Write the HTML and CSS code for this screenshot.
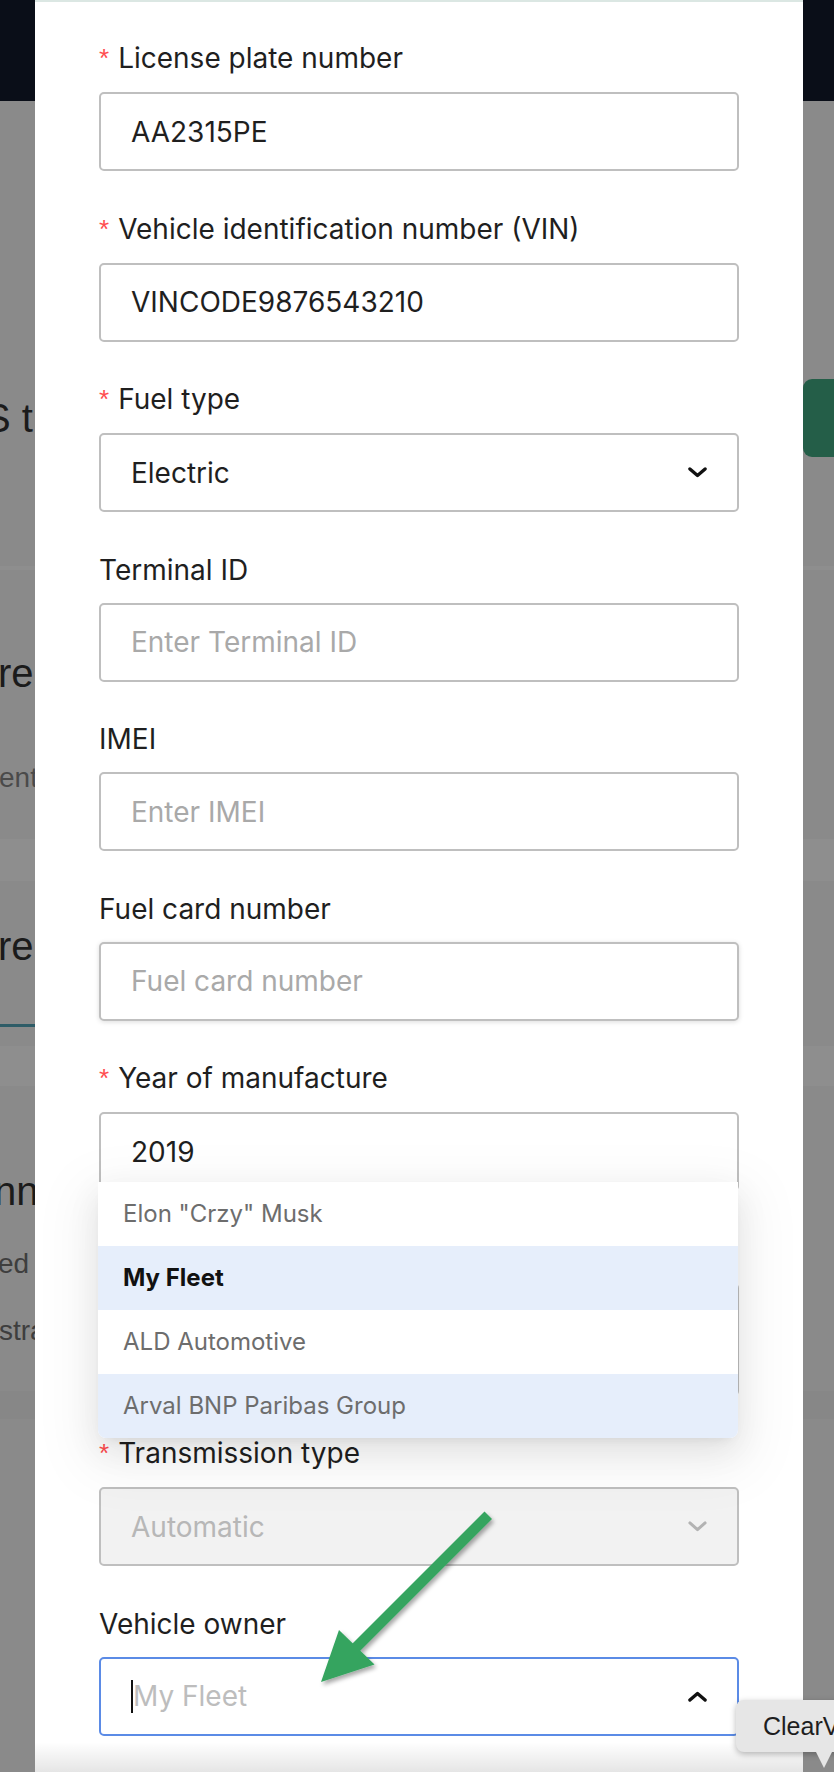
FILE: index.html
```html
<!DOCTYPE html>
<html lang="en">
<head>
<meta charset="utf-8">
<title>Edit vehicle</title>
<link rel="stylesheet" href="styles.css">
</head>
<body>
<div class="page">
  <div class="bg-header"></div>
  <div class="bg-sec bg-sec1">
    <div class="bg-h bg-h1">S tracking</div>
    <div class="bg-btn"></div>
  </div>
  <div class="bg-band bg-band-thin"></div>
  <div class="bg-sec bg-sec2">
    <div class="bg-h bg-re">re settings</div>
    <div class="bg-sub bg-ent">ent devices</div>
  </div>
  <div class="bg-band bg-band-a"></div>
  <div class="bg-sec bg-sec3">
    <div class="bg-h bg-re2">re list</div>
    <div class="bg-tab-line"></div>
  </div>
  <div class="bg-band bg-band-b"></div>
  <div class="bg-sec bg-sec4">
    <div class="bg-h bg-nn">nnected</div>
    <div class="bg-sub bg-ed">ed by</div>
    <div class="bg-sub bg-stra">stration</div>
  </div>
  <div class="bg-band bg-band-c"></div>
</div>

<div class="modal">
  <div class="field">
    <div class="label"><span class="req">*</span>License plate number</div>
    <div class="control">AA2315PE</div>
  </div>
  <div class="field">
    <div class="label"><span class="req">*</span>Vehicle identification number (VIN)</div>
    <div class="control">VINCODE9876543210</div>
  </div>
  <div class="field">
    <div class="label"><span class="req">*</span>Fuel type</div>
    <div class="control select">
      <span>Electric</span>
      <svg class="chev" viewBox="0 0 19 11" width="19" height="11"><path d="M1.9 1.9 L9.5 8.6 L17.1 1.9" fill="none" stroke="currentColor" stroke-width="3.3" stroke-linecap="round" stroke-linejoin="round"/></svg>
    </div>
  </div>
  <div class="field">
    <div class="label">Terminal ID</div>
    <div class="control placeholder">Enter Terminal ID</div>
  </div>
  <div class="field">
    <div class="label">IMEI</div>
    <div class="control placeholder">Enter IMEI</div>
  </div>
  <div class="field">
    <div class="label">Fuel card number</div>
    <div class="control placeholder shadowed">Fuel card number</div>
  </div>
  <div class="field">
    <div class="label"><span class="req">*</span>Year of manufacture</div>
    <div class="control">2019</div>
  </div>
  <div class="field">
    <div class="label"><span class="req">*</span>Vehicle type</div>
    <div class="control tall placeholder">Enter description</div>
  </div>
  <div class="field">
    <div class="label"><span class="req">*</span>Transmission type</div>
    <div class="control select disabled">
      <span>Automatic</span>
      <svg class="chev" viewBox="0 0 19 11" width="19" height="11"><path d="M1.9 1.9 L9.5 8.6 L17.1 1.9" fill="none" stroke="currentColor" stroke-width="3" stroke-linecap="round" stroke-linejoin="round"/></svg>
    </div>
  </div>
  <div class="field">
    <div class="label">Vehicle owner</div>
    <div class="control select focused">
      <span class="caret"></span><span class="ph-light">My Fleet</span>
      <svg class="chev" viewBox="0 0 19 11" width="19" height="11"><path d="M1.9 9.1 L9.5 2.4 L17.1 9.1" fill="none" stroke="currentColor" stroke-width="3.3" stroke-linecap="round" stroke-linejoin="round"/></svg>
    </div>
  </div>

  <div class="dropdown">
    <div class="opt">Elon "Crzy" Musk</div>
    <div class="opt active sel">My Fleet</div>
    <div class="opt">ALD Automotive</div>
    <div class="opt active">Arval BNP Paribas Group</div>
  </div>
  <div class="modal-fade"></div>
</div>

<svg class="annot" width="834" height="1772" viewBox="0 0 834 1772">
  <defs>
    <filter id="sh" x="-20%" y="-20%" width="140%" height="140%">
      <feDropShadow dx="2" dy="3" stdDeviation="2.2" flood-color="#000" flood-opacity="0.35"/>
    </filter>
  </defs>
  <g filter="url(#sh)" fill="#34a45f" stroke="none">
    <polygon points="484.5,1511.5 492,1519 359,1652 351.5,1644.5"/>
    <polygon points="339,1630 374.5,1664.5 321,1682"/>
  </g>
</svg>

<div class="tooltip">ClearValue</div>
</body>
</html>
```

FILE: styles.css
```css
html, body {
  margin: 0;
  padding: 0;
}
body {
  width: 834px;
  height: 1772px;
  overflow: hidden;
  position: relative;
  background: #8a8a8a;
  font-family: Inter, "Noto Sans", sans-serif;
}

/* ---------- page behind the modal (masked) ---------- */
.page {
  width: 834px;
  font-family: "Liberation Sans", Arial, sans-serif;
  color: #1c1c1c;
}
.bg-header {
  height: 101px;
  background: #0a0e18;
}
.bg-sec1 {
  height: 465px;
  display: flex;
  justify-content: space-between;
  align-items: flex-start;
}
.bg-h {
  font-size: 40px;
  line-height: 40px;
  white-space: nowrap;
  color: #1b1b1b;
}
.bg-sub {
  font-size: 28px;
  line-height: 40px;
  white-space: nowrap;
  color: #3e3e3e;
}
.bg-h1 {
  margin: 297px 0 0 -16px;
}
.bg-btn {
  margin-top: 278px;
  width: 60px;
  height: 78px;
  margin-right: -29px;
  background: #245e48;
  border-radius: 9px;
}
.bg-band {
  background: #8e8e8e;
}
.bg-band-thin { height: 4px; }
.bg-sec2 {
  height: 269px;
  padding-top: 83px;
  box-sizing: border-box;
}
.bg-re { margin-left: -2px; }
.bg-ent { margin: 65px 0 0 -1px; color: #4a4a4a; }
.bg-band-a { height: 42px; }
.bg-sec3 {
  height: 165px;
  padding-top: 45px;
  box-sizing: border-box;
}
.bg-re2 { margin-left: -2px; }
.bg-tab-line {
  margin-top: 58px;
  width: 200px;
  height: 3px;
  background: #2e5c67;
}
.bg-band-b { height: 40px; }
.bg-sec4 {
  height: 305px;
  padding-top: 85px;
  box-sizing: border-box;
}
.bg-nn { margin-left: -6px; }
.bg-ed { margin: 33px 0 0 -2px; }
.bg-stra { margin: 27px 0 0 -1px; }
.bg-band-c { height: 28px; background: #878787; }

/* ---------- modal ---------- */
.modal {
  position: absolute;
  left: 35px;
  top: 0;
  width: 768px;
  height: 1772px;
  box-sizing: border-box;
  background: #fff;
  border-top: 2px solid #dbe7e3;
  padding: 34px 64px 0;
}
.field {
  margin-bottom: 35.5px;
}
.label {
  font-size: 28px;
  line-height: 44px;
  padding-bottom: 11px;
  color: #1f1f1f;
  white-space: nowrap;
}
.req {
  color: #ff4d4f;
  font-family: "Liberation Sans", Arial, sans-serif;
  font-size: 26px;
  margin-right: 9px;
  position: relative;
  top: -1px;
}
.control {
  height: 79px;
  box-sizing: border-box;
  border: 2px solid #bfbfbf;
  border-radius: 5px;
  padding: 0 30px;
  display: flex;
  align-items: center;
  font-size: 28px;
  color: #1f1f1f;
  background: #fff;
  white-space: nowrap;
}
.control.placeholder {
  color: #a9a9a9;
}
.control.shadowed {
  box-shadow: 0 1px 5px rgba(0, 0, 0, 0.14);
}
.control.tall {
  height: 113px;
}
.chev {
  margin-left: auto;
  color: #111;
  display: block;
}
.control.disabled {
  background: #f2f2f2;
  color: #b7b7b7;
}
.control.disabled .chev {
  color: #b3b3b3;
}
.control.focused {
  border-color: #5b8be6;
}
.caret {
  width: 2px;
  height: 33px;
  background: #111;
}
.ph-light {
  color: #bdbdbd;
}

/* dropdown overlay */
.dropdown {
  position: absolute;
  top: 1180px;
  left: 63px;
  width: 640px;
  background: #fff;
  border-radius: 0 0 8px 8px;
  overflow: hidden;
  box-shadow: 0 12px 32px rgba(0, 0, 0, 0.08),
              0 6px 12px -8px rgba(0, 0, 0, 0.12),
              0 18px 56px 16px rgba(0, 0, 0, 0.05);
  z-index: 2;
}
.opt {
  height: 64px;
  line-height: 64px;
  padding: 0 25px;
  font-size: 24px;
  color: #6d6d6d;
  white-space: nowrap;
}
.opt.active {
  background: #e6eefb;
}
.opt.sel {
  font-weight: 700;
  color: #111;
}
.modal-fade {
  position: absolute;
  left: 0;
  right: 0;
  bottom: 0;
  height: 30px;
  background: linear-gradient(to bottom, rgba(0, 0, 0, 0), rgba(0, 0, 0, 0.1));
}

/* annotation arrow */
.annot {
  position: absolute;
  left: 0;
  top: 0;
  z-index: 5;
  pointer-events: none;
}

/* native tooltip */
.tooltip {
  position: absolute;
  left: 736px;
  top: 1700px;
  height: 52px;
  line-height: 52px;
  padding: 0 24px 0 27px;
  background: #e6e6e6;
  border-radius: 8px;
  box-shadow: 0 2px 6px rgba(0, 0, 0, 0.28);
  font-family: "Liberation Sans", Arial, sans-serif;
  font-size: 25px;
  color: #1e1e1e;
  white-space: nowrap;
  z-index: 6;
}
.tooltip::after {
  content: "";
  position: absolute;
  left: 80px;
  bottom: -16px;
  border-left: 8px solid transparent;
  border-right: 8px solid transparent;
  border-top: 16px solid #e6e6e6;
}
```
